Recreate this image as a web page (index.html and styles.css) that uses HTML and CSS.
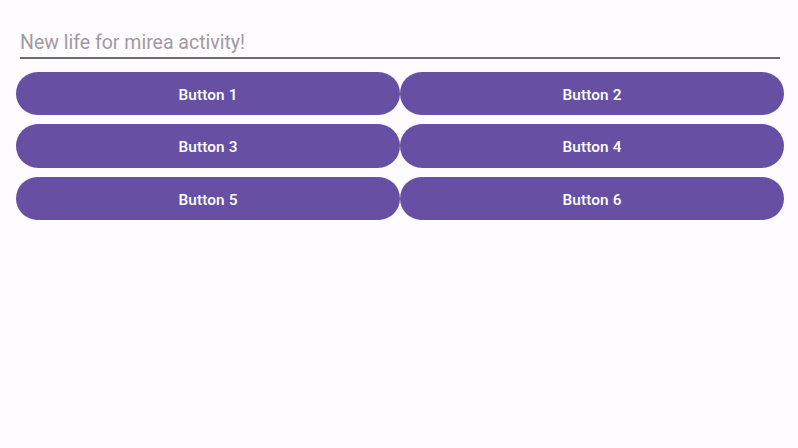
FILE: index.html
```html
<!DOCTYPE html>
<html>
<head>
<meta charset="utf-8">
<link rel="stylesheet" href="styles.css">
</head>
<body>
<div class="screen">
  <div class="field"><span class="hint">New life for mirea activity!</span></div>
  <div class="grid">
    <div class="cell"><button class="btn">Button 1</button></div>
    <div class="cell"><button class="btn">Button 2</button></div>
    <div class="cell"><button class="btn">Button 3</button></div>
    <div class="cell"><button class="btn">Button 4</button></div>
    <div class="cell"><button class="btn">Button 5</button></div>
    <div class="cell"><button class="btn">Button 6</button></div>
  </div>
</div>
</body>
</html>
```
FILE: styles.css
```css
html, body {
  margin: 0;
  padding: 0;
  background: #fffbfe;
  font-family: Roboto, "Noto Sans", sans-serif;
}
.screen {
  width: 798px;
  height: 448px;
  padding: 0 14px 0 16px;
  box-sizing: border-box;
}
.field {
  margin: 0 4px;
  height: 67px;
  box-sizing: border-box;
  padding-top: 30px;
}
.hint {
  display: block;
  font-size: 19.5px;
  line-height: 26px;
  color: #9f9aa3;
  border-bottom: 2px solid #6f6a72;
  height: 26px;
  padding-bottom: 1px;
}
.grid {
  display: grid;
  grid-template-columns: 384px 384px;
  grid-auto-rows: 52.5px;
}
.cell {
  padding: 4.5px 0;
  box-sizing: border-box;
  display: flex;
}
.btn {
  flex: 1;
  border: none;
  border-radius: 22px;
  background: #6750a4;
  color: #ffffff;
  font-family: "Roboto Medium", Roboto, "Noto Sans", sans-serif;
  font-weight: 500;
  font-size: 15.4px;
  letter-spacing: 0.1px;
  padding: 3px 0 0 0;
  margin: 0;
}
```
